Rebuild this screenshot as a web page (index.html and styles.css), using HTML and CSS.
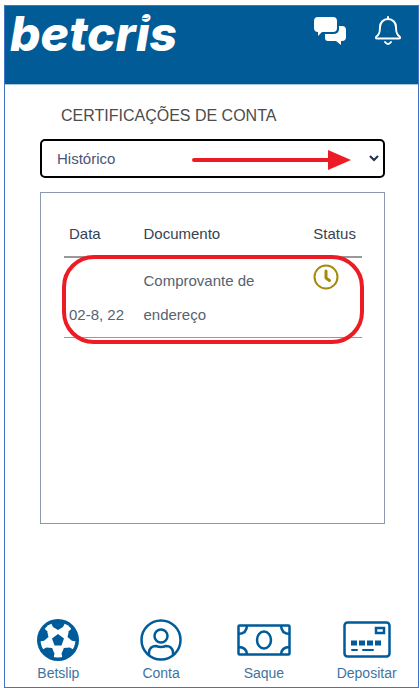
FILE: index.html
```html
<!DOCTYPE html>
<html lang="pt-BR">
<head>
  <meta charset="UTF-8" />
  <meta name="viewport" content="width=device-width, initial-scale=1" />
  <title>Betcris - Certificações de conta</title>
  <link rel="stylesheet" href="styles.css">
</head>
<body>
  <div class="app">
    <header class="topbar">
      <a class="logo" href="#">betcr<span class="logo-i">i</span>s</a>
      <div class="topbar-actions">
        <button type="button" aria-label="Chat">
          <svg width="34" height="30" viewBox="0 0 34 30" fill="#fff">
            <path d="M5 1h15q4 0 4 4v7q0 4-4 4H9l-4 4v-4Q1 16 1 12V5q0-4 4-4z"/>
            <path d="M26 10h3q4 0 4 4v7q0 4-4 4h-1v4l-5-4h-8q-3 0-3-3v-4h8q6 0 6-5z"/>
          </svg>
        </button>
        <button type="button" aria-label="Notificações">
          <svg width="26" height="30" viewBox="0 0 26 30" fill="none" stroke="#fff" stroke-width="2" stroke-linejoin="round" stroke-linecap="round">
            <path d="M13 1v2M13 3C8 3 5 7 5 11c0 6-1 8-4 10q-.5 1.500 1 1.500h22q1.500 0 1-1.500c-3-2-4-4-4-10 0-4-3-8-8-8z"/>
            <path d="M10 26q3 4 6 0"/>
          </svg>
        </button>
      </div>
    </header>

    <main class="content">
      <h1><label for="view">CERTIFICAÇÕES DE CONTA</label></h1>
      <div class="select-box">
        <select id="view">
          <option>Histórico</option>
        </select>
        <svg class="arrow" width="160" height="22" viewBox="0 0 160 22">
          <path d="M2 11h138" stroke="#ed1c24" stroke-width="4" stroke-linecap="round"/>
          <path d="M136 1l23 10-23 10z" fill="#ed1c24"/>
        </svg>
        <svg class="chevron" width="10" height="8" viewBox="0 0 10 8" fill="none" stroke="#1b2f57" stroke-width="2">
          <path d="M1 1l4 4 4-4"/>
        </svg>
      </div>

      <section class="panel">
        <div class="history">
          <table>
            <thead>
              <tr>
                <th class="col-date">Data</th>
                <th class="col-doc">Documento</th>
                <th class="col-status">Status</th>
              </tr>
            </thead>
            <tbody>
              <tr>
                <td class="date">02-8, 22</td>
                <td>Comprovante de<br>endereço</td>
                <td class="status">
                  <svg width="26" height="26" viewBox="0 0 26 26" fill="none" stroke="#a58a0c" role="img" aria-label="Pendente">
                    <circle cx="13" cy="13" r="11.500" stroke-width="2"/>
                    <path d="M13 7v7l3.500 2.500" stroke-width="3" stroke-linecap="round" stroke-linejoin="round"/>
                  </svg>
                </td>
              </tr>
            </tbody>
          </table>
          <div class="highlight"></div>
        </div>
      </section>
    </main>

    <nav class="tabs">
      <a href="#">
        <svg width="42" height="42" viewBox="0 0 42 42" fill="#005b9a">
          <circle cx="21" cy="21" r="21"/>
          <circle cx="21" cy="21" r="17.500" fill="#fff"/>
          <path d="M13 2h16l-3 6-5 3-5-3z"/>
          <path d="M13 2h16l-3 6-5 3-5-3z" transform="rotate(72 21 21)"/>
          <path d="M13 2h16l-3 6-5 3-5-3z" transform="rotate(144 21 21)"/>
          <path d="M13 2h16l-3 6-5 3-5-3z" transform="rotate(216 21 21)"/>
          <path d="M13 2h16l-3 6-5 3-5-3z" transform="rotate(288 21 21)"/>
          <path d="M21 15l6 4.500-2.500 7h-7l-2.500-7z"/>
        </svg>
        <span>Betslip</span>
      </a>
      <a href="#">
        <svg width="42" height="42" viewBox="0 0 42 42" fill="none" stroke="#005b9a" stroke-width="2.500">
          <circle cx="21" cy="21" r="19.500"/>
          <circle cx="21" cy="17" r="6.500"/>
          <path d="M9 36v-3q1-6 7-6 5 2 10 0 6 0 7 6v3"/>
        </svg>
        <span>Conta</span>
      </a>
      <a href="#">
        <svg width="54" height="42" viewBox="0 0 54 42" fill="none" stroke="#005b9a" stroke-width="2.500">
          <rect x="1.500" y="6.500" width="51" height="29" rx="1"/>
          <ellipse cx="27" cy="21" rx="7" ry="8.500"/>
          <path d="M10 6q0 9-9 9M44 6q0 9 9 9M10 36q0-8-9-8M44 36q0-8 9-8"/>
        </svg>
        <span>Saque</span>
      </a>
      <a href="#">
        <svg width="48" height="42" viewBox="0 0 48 42" fill="none" stroke="#005b9a" stroke-width="2.500">
          <rect x="1.500" y="3.500" width="45" height="34" rx="3"/>
          <rect x="33" y="9" width="8" height="5"/>
          <path d="M8 24h31" stroke-width="5" stroke-dasharray="6 2"/>
          <path d="M9 31h5M20 31h10" stroke-width="2" stroke-linecap="round"/>
        </svg>
        <span>Depositar</span>
      </a>
    </nav>
  </div>
</body>
</html>
```

FILE: styles.css
```css
* {
  box-sizing: border-box;
}
body {
  margin: 0;
  padding: 5px 1px 0 4px;
  background: #fff;
  color: #566270;
  font-family: "Liberation Sans", Arial, sans-serif;
  font-size: 15px;
}
.app {
  display: flex;
  flex-direction: column;
  min-height: calc(100vh - 5px);
  border: 1px solid #4472c4;
}
.topbar {
  display: flex;
  justify-content: space-between;
  align-items: flex-start;
  height: 79px;
  padding: 0 17px 0 5px;
  background: #005b96;
  border-bottom: 1px solid #a9c8e0;
}
.logo {
  color: #fff;
  font-family: Inter, "Open Sans", sans-serif;
  font-size: 48px;
  font-weight: 800;
  font-style: italic;
  line-height: 56px;
  text-decoration: none;
}
.logo-i {
  position: relative;
}
/* the dot of the i is a ball */
.logo-i::after {
  content: "";
  position: absolute;
  top: 10px;
  left: 4px;
  width: 9px;
  height: 4px;
  border-bottom: 1px solid #005b96;
  border-radius: 50%;
}
.topbar-actions {
  display: flex;
  gap: 28px;
  padding-top: 10px;
}
.topbar-actions button {
  padding: 0;
  border: none;
  background: none;
  cursor: pointer;
}
.topbar-actions svg {
  display: block;
}
.content {
  flex: 1;
  padding: 20px 33px 0 35px;
}
h1 {
  margin: 0 0 12px;
  padding-left: 21px;
  color: #4c4c4c;
  font-size: 16px;
  font-weight: normal;
  line-height: 22px;
}
.select-box {
  position: relative;
  margin-bottom: 14px;
}
select {
  display: block;
  width: 100%;
  height: 39px;
  padding: 0 15px;
  border: 2px solid #000;
  border-radius: 5px;
  background: #fff;
  color: #4a5478;
  font-family: inherit;
  font-size: 15px;
  appearance: none;
}
.arrow {
  position: absolute;
  top: 10px;
  right: 33px;
  pointer-events: none;
}
.chevron {
  position: absolute;
  top: 16px;
  right: 6px;
  pointer-events: none;
}
.panel {
  min-height: 332px;
  padding: 24px 22px 24px 23px;
  border: 1px solid #8c98ae;
}
.history {
  position: relative;
}
table {
  width: 100%;
  border-collapse: collapse;
  line-height: 34px;
}
th {
  height: 39px;
  padding: 0 0 5px 5px;
  border-bottom: 2px solid #999;
  font-weight: normal;
  text-align: left;
  color: #364352;
}
.col-date {
  width: 25%;
}
.col-doc {
  width: 57%;
}
td {
  padding: 6px 0 5px 5px;
  border-bottom: 1px solid #999;
}
.date {
  vertical-align: bottom;
  white-space: nowrap;
}
.status {
  vertical-align: top;
}
.status svg {
  display: block;
}
.highlight {
  position: absolute;
  top: 38px;
  right: -2px;
  bottom: -6px;
  left: -2px;
  border: 4px solid #ed1c24;
  border-radius: 32px;
}
.tabs {
  display: grid;
  grid-template-columns: repeat(4, 1fr);
  padding: 0 0 5px 2px;
}
.tabs a {
  display: flex;
  flex-direction: column;
  align-items: center;
  gap: 3px;
  color: #3f74a2;
  font-size: 14px;
  line-height: 18px;
  text-decoration: none;
}
```
